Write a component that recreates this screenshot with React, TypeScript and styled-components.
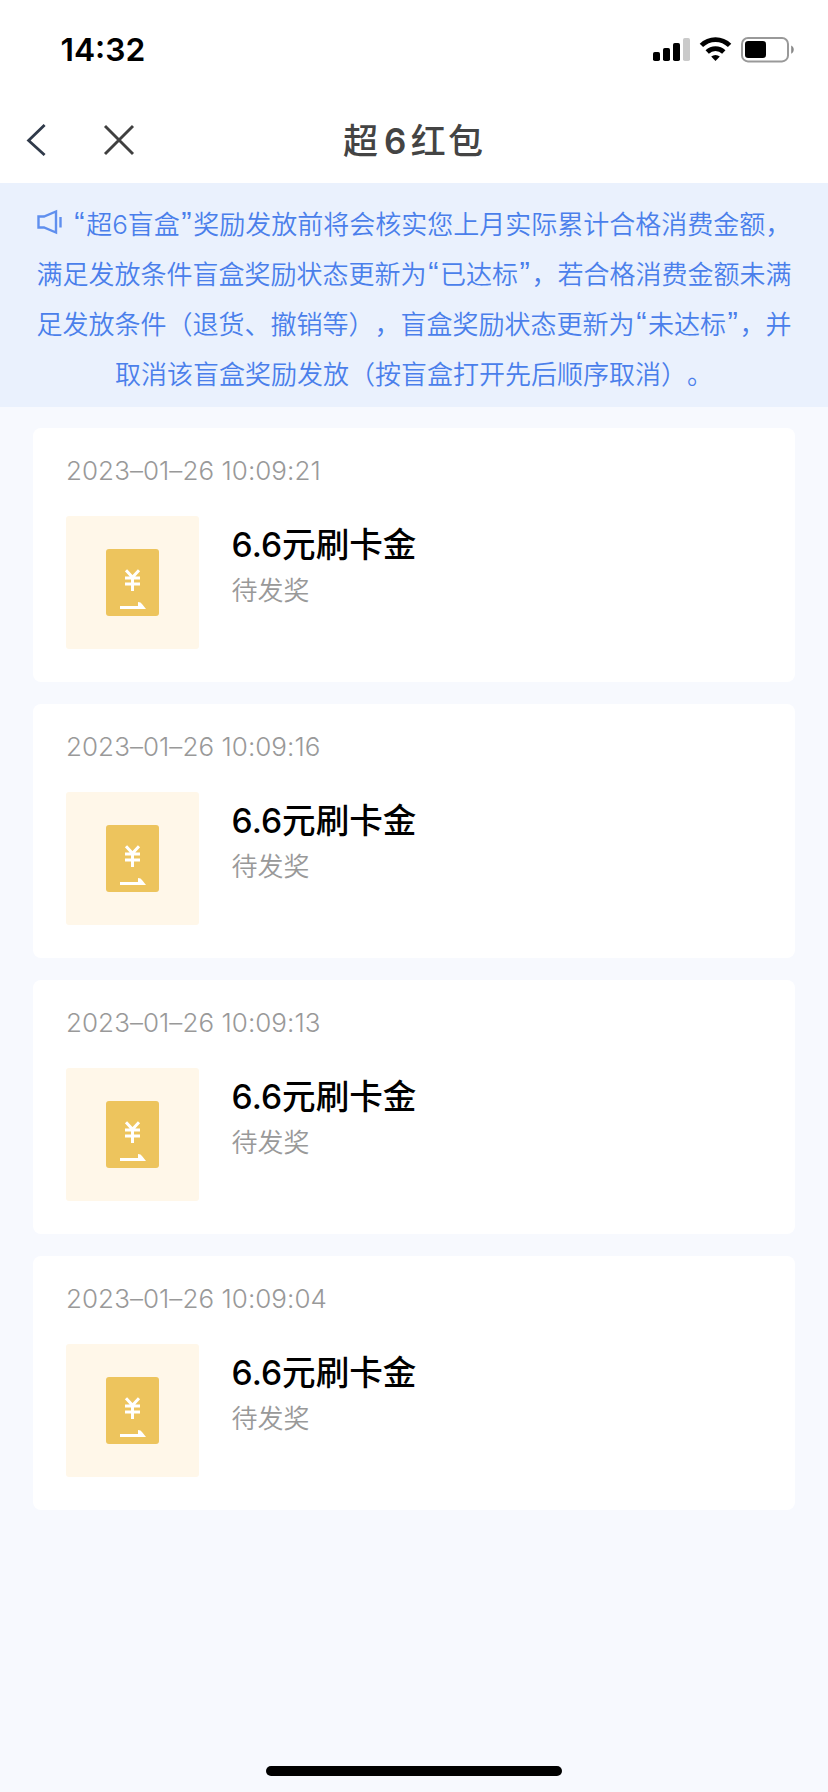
import React from "react";
import styled, { createGlobalStyle } from "styled-components";

const GlobalStyle = createGlobalStyle`
  html, body { margin: 0; background: #f7f9fe; }
  * { box-sizing: border-box; }
`;

const Screen = styled.div`
  display: flex;
  flex-direction: column;
  width: 828px;
  height: 1792px;
  background: #f7f9fe;
  font-family: Inter, "Noto Sans CJK SC", sans-serif;
  text-spacing-trim: space-all;
`;

const StatusBar = styled.header`
  display: flex;
  align-items: center;
  justify-content: space-between;
  height: 100px;
  padding: 0 33px 0 60.5px;
  background: #fff;
`;

const Clock = styled.time`
  font-size: 31.8px;
  font-weight: 600;
  line-height: 40px;
  color: #000;
`;

const StatusIcons = styled.svg`
  display: block;
  width: 142px;
  height: 26px;
`;

const NavBar = styled.nav`
  display: grid;
  grid-template-columns: 200px 1fr 200px;
  align-items: center;
  height: 83px;
  padding-bottom: 3px;
  background: #fff;
`;

const NavActions = styled.div`
  display: flex;
  align-items: center;
  gap: 56px;
  padding-left: 26px;
`;

const IconButton = styled.button`
  display: flex;
  padding: 0;
  border: 0;
  background: none;
`;

const PageTitle = styled.h1`
  margin: 2px 0 0;
  font-size: 35px;
  font-weight: 500;
  line-height: 50px;
  letter-spacing: 2.2px;
  text-align: center;
  white-space: nowrap;
  color: #444;
  b { font-weight: 600; margin: 0 2px 0 4px; }
`;

const Notice = styled.section`
  height: 224px;
  padding: 17px 36px 0;
  background: #eaf1fd;
`;

const NoticeLine = styled.p`
  display: flex;
  justify-content: center;
  align-items: center;
  height: 50px;
  margin: 0;
  font-size: 26px;
  font-weight: 350;
  line-height: 50px;
  white-space: nowrap;
  color: #4a7feb;
`;

const Quote = styled.span`
  display: inline-block;
  width: 13.4px;
  font-family: "Liberation Sans", sans-serif;
  font-size: 31px;
  line-height: 1;
  text-align: center;
`;

const HornIcon = styled.svg`
  flex: none;
  width: 26px;
  height: 26px;
  margin: 0 10px 7px 0;
`;

const RewardList = styled.main`
  display: flex;
  flex-direction: column;
  flex: 1;
  gap: 22px;
  padding: 21px 33px 0;
`;

const Card = styled.article`
  height: 254px;
  padding: 24px 33px 0;
  border-radius: 8px;
  background: #fff;
`;

const DateText = styled.time`
  display: block;
  font-size: 26px;
  font-weight: 330;
  line-height: 38px;
  letter-spacing: 0.05px;
  color: #999;
`;

const Reward = styled.div`
  display: flex;
  gap: 32.6px;
  margin-top: 26px;
`;

const Thumb = styled.div`
  display: flex;
  align-items: center;
  justify-content: center;
  width: 133px;
  height: 133px;
  border-radius: 3px;
  background: #fff7e9;
`;

const RewardName = styled.h2`
  margin: 6px 0 0;
  font-size: 33.6px;
  font-weight: 500;
  line-height: 46px;
  color: #000;
`;

const RewardState = styled.p`
  margin: 4px 0 0;
  font-size: 26px;
  font-weight: 350;
  line-height: 38px;
  color: #999;
`;

const HomeArea = styled.footer`
  display: flex;
  justify-content: center;
  padding-bottom: 16px;
`;

const HomeIndicator = styled.div`
  width: 296px;
  height: 10px;
  border-radius: 5px;
  background: #000;
`;

const rewards = [
  "2023–01–26 10:09:21",
  "2023–01–26 10:09:16",
  "2023–01–26 10:09:13",
  "2023–01–26 10:09:04",
];

function DeviceIcons() {
  return (
    <StatusIcons viewBox="0 0 142 26">
      <rect x="0" y="15" width="7" height="9" rx="1.8" />
      <rect x="10" y="11" width="7" height="13" rx="1.8" />
      <rect x="20" y="6" width="7" height="18" rx="1.8" />
      <rect x="30" y="1" width="7" height="23" rx="1.8" fill="#cacaca" />
      <g fill="none" stroke="#000" strokeWidth="4.8">
        <path d="M48.400 8.400a20 20 0 0 1 28.200 0" />
        <path d="M54.200 15a12 12 0 0 1 16.600 0" />
      </g>
      <path d="M58.200 19.600a6.600 6.600 0 0 1 8.600 0L62.500 24z" />
      <rect x="89" y="1" width="46" height="23.4" rx="6" fill="none" stroke="#999" strokeWidth="2" />
      <rect x="92" y="4" width="21" height="17" rx="3.2" />
      <path d="M138.200 8.600c3.400 1.400 3.400 6.800 0 8.200z" fill="#888" />
    </StatusIcons>
  );
}

function Packet() {
  return (
    <svg width="53" height="67" viewBox="0 0 53 67">
      <rect width="53" height="67" rx="3" fill="#edc45d" />
      <path d="M20 21.200l6.500 7 6.500-7M19 29h15M19 35h15M26.500 28v14" fill="none" stroke="#fff" strokeWidth="3" />
      <path d="M14 57h18v-4q3 0 4 2l4 5H14z" fill="#fff" />
    </svg>
  );
}

function Quoted({ children }: { children: React.ReactNode }) {
  return (
    <>
      <Quote>“</Quote>
      {children}
      <Quote>”</Quote>
    </>
  );
}

export default function App() {
  return (
    <Screen lang="zh-CN">
      <GlobalStyle />
      <StatusBar>
        <Clock>14:32</Clock>
        <DeviceIcons />
      </StatusBar>
      <NavBar>
        <NavActions>
          <IconButton aria-label="返回">
            <svg width="20" height="32" viewBox="0 0 20 32" fill="none" stroke="#303a4a" strokeWidth="2.8">
              <path d="M18.600 1L2.600 16.500 18.600 31" />
            </svg>
          </IconButton>
          <IconButton aria-label="关闭">
            <svg width="34" height="32" viewBox="0 0 34 32" fill="none" stroke="#404040" strokeWidth="2.9">
              <path d="M3 2L31 30M31 2L3 30" />
            </svg>
          </IconButton>
        </NavActions>
        <PageTitle>超<b>6</b>红包</PageTitle>
      </NavBar>
      <Notice>
        <NoticeLine>
          <HornIcon viewBox="0 0 26 26" fill="none" stroke="#5f8fee" strokeWidth="2.4">
            <path d="M1.500 7.500H7L19 2.500v21L7 18.500H1.500z" />
            <path d="M23.500 8v10.500" />
          </HornIcon>
          <span><Quoted>超6盲盒</Quoted>奖励发放前将会核实您上月实际累计合格消费金额，</span>
        </NoticeLine>
        <NoticeLine>
          <span>满足发放条件盲盒奖励状态更新为<Quoted>已达标</Quoted>，若合格消费金额未满</span>
        </NoticeLine>
        <NoticeLine>
          <span>足发放条件（退货、撤销等），盲盒奖励状态更新为<Quoted>未达标</Quoted>，并</span>
        </NoticeLine>
        <NoticeLine>
          <span>取消该盲盒奖励发放（按盲盒打开先后顺序取消）。</span>
        </NoticeLine>
      </Notice>
      <RewardList>
        {rewards.map((time) => (
          <Card key={time}>
            <DateText>{time}</DateText>
            <Reward>
              <Thumb><Packet /></Thumb>
              <div>
                <RewardName>6.6元刷卡金</RewardName>
                <RewardState>待发奖</RewardState>
              </div>
            </Reward>
          </Card>
        ))}
      </RewardList>
      <HomeArea>
        <HomeIndicator />
      </HomeArea>
    </Screen>
  );
}
